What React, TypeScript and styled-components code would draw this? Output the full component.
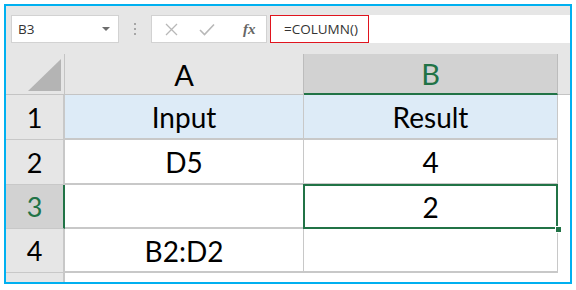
import { Fragment } from 'react'
import styled, { createGlobalStyle } from 'styled-components'

const GlobalStyle = createGlobalStyle`
  html, body {
    margin: 0;
    padding: 0;
    background: #ffffff;
  }
  body {
    font-family: 'Lato', 'Liberation Sans', sans-serif;
  }
`

const Frame = styled.div`
  margin: 4px 0 0 4px;
  width: 568px;
  height: 280px;
  box-sizing: border-box;
  border: 2px solid #00b0f0;
  background: #e6e6e6;
  overflow: hidden;
  display: flex;
  flex-direction: column;
`

const FormulaBar = styled.div`
  flex-shrink: 0;
  display: flex;
  align-items: stretch;
  height: 28px;
  margin-top: 9px;
  padding-left: 5px;
  font-family: 'Open Sans', 'Noto Sans', sans-serif;
  font-size: 13.5px;
  color: #333333;
`

const NameBox = styled.div`
  width: 108px;
  box-sizing: border-box;
  background: #ffffff;
  border: 1px solid #d2d2d2;
  display: flex;
  align-items: center;
  justify-content: space-between;
  padding: 0 8px 0 6px;
`

const DropArrow = styled.span`
  width: 0;
  height: 0;
  border-left: 4px solid transparent;
  border-right: 4px solid transparent;
  border-top: 4px solid #6d6d6d;
`

const Grip = styled.div`
  width: 32px;
  display: flex;
  flex-direction: column;
  align-items: center;
  justify-content: center;
  gap: 3px;
`

const GripDot = styled.span`
  width: 2px;
  height: 2px;
  background: #a6a6a6;
`

const IconBox = styled.div`
  width: 116px;
  box-sizing: border-box;
  background: #ffffff;
  border: 1px solid #d2d2d2;
  display: flex;
  align-items: center;
  padding-left: 13px;
  gap: 21px;
`

const FxLabel = styled.span`
  font-family: 'Liberation Serif', 'DejaVu Serif', serif;
  font-style: italic;
  font-weight: bold;
  font-size: 15px;
  color: #666666;
  margin-left: 7px;
`

const FormulaInput = styled.div`
  flex: 1;
  margin-left: 3px;
  background: #ffffff;
  display: flex;
`

const FormulaText = styled.div`
  width: 99px;
  box-sizing: border-box;
  border: 1px solid #e0141e;
  display: flex;
  align-items: center;
  padding-left: 13px;
  color: #333333;
`

const Grid = styled.div`
  flex-shrink: 0;
  margin-top: 11px;
  display: grid;
  grid-template-columns: 59px 239px 254px 12px;
  grid-template-rows: 41px 45px 45px 44px 44px 20px;
`

const Corner = styled.div`
  background: #e6e6e6;
  border-right: 1px solid #c4c4c4;
  border-bottom: 1px solid #c4c4c4;
  display: flex;
  align-items: flex-end;
  justify-content: flex-end;
  padding: 0 3px 3px 0;
`

const ColHeader = styled.div<{ $active?: boolean; $empty?: boolean }>`
  background: ${({ $active }) => ($active ? '#d2d2d2' : '#e6e6e6')};
  border-right: ${({ $empty }) => ($empty ? 'none' : '1px solid #bcbcbc')};
  border-bottom: ${({ $active }) => ($active ? '2px solid #217346' : '1px solid #c4c4c4')};
  display: flex;
  align-items: center;
  justify-content: center;
  font-size: 29px;
  color: ${({ $active }) => ($active ? '#217346' : '#000000')};
`

const RowHeader = styled.div<{ $active?: boolean }>`
  background: ${({ $active }) => ($active ? '#d2d2d2' : '#e6e6e6')};
  border-right: ${({ $active }) => ($active ? '2px solid #217346' : '2px solid #c8c8c8')};
  border-bottom: 1px solid #c8c8c8;
  display: flex;
  align-items: center;
  justify-content: center;
  font-size: 27px;
  color: ${({ $active }) => ($active ? '#217346' : '#000000')};
`

const Cell = styled.div<{ $head?: boolean; $selected?: boolean }>`
  position: relative;
  background: ${({ $head }) => ($head ? '#ddebf7' : '#ffffff')};
  border-right: 1px solid #c8c8c8;
  border-bottom: 2px solid #c8c8c8;
  display: flex;
  align-items: center;
  justify-content: center;
  padding-top: 1px;
  font-size: 28px;
  color: #000000;

  ${({ $selected }) =>
    $selected &&
    `
    &::after {
      content: '';
      position: absolute;
      inset: -1px -1px -2px -1px;
      border: 2px solid #217346;
    }
  `}
`

const FillHandle = styled.span`
  position: absolute;
  right: -5px;
  bottom: -6px;
  width: 5px;
  height: 5px;
  background: #217346;
  border: 1px solid #ffffff;
  z-index: 2;
`

const Spill = styled.div`
  background: #ffffff;
`

const rows = [
  { n: '1', a: 'Input', b: 'Result', head: true },
  { n: '2', a: 'D5', b: '4' },
  { n: '3', a: '', b: '2', active: true },
  { n: '4', a: 'B2:D2', b: '' },
]

export default function App() {
  return (
    <>
      <GlobalStyle />
      <Frame>
        <FormulaBar>
          <NameBox>
            <span>B3</span>
            <DropArrow />
          </NameBox>
          <Grip>
            <GripDot />
            <GripDot />
            <GripDot />
          </Grip>
          <IconBox>
            <svg width="13" height="13" viewBox="0 0 13 13">
              <path d="M1 1 L12 12 M12 1 L1 12" stroke="#b8b8b8" strokeWidth="1.3" fill="none" />
            </svg>
            <svg width="16" height="13" viewBox="0 0 16 13">
              <path d="M1 7 L5.5 11.5 L15 1.5" stroke="#b8b8b8" strokeWidth="1.6" fill="none" />
            </svg>
            <FxLabel>fx</FxLabel>
          </IconBox>
          <FormulaInput>
            <FormulaText>=COLUMN()</FormulaText>
          </FormulaInput>
        </FormulaBar>
        <Grid>
          <Corner>
            <svg width="33" height="32" viewBox="0 0 33 32">
              <path d="M33 0 L33 32 L0 32 Z" fill="#b4b4b4" />
            </svg>
          </Corner>
          <ColHeader>A</ColHeader>
          <ColHeader $active>B</ColHeader>
          <ColHeader $empty />
          {rows.map((r) => (
            <Fragment key={r.n}>
              <RowHeader $active={r.active}>{r.n}</RowHeader>
              <Cell $head={r.head}>{r.a}</Cell>
              <Cell $head={r.head} $selected={r.active}>
                {r.b}
                {r.active && <FillHandle />}
              </Cell>
              <Spill />
            </Fragment>
          ))}
          <RowHeader />
          <Spill />
          <Spill />
          <Spill />
        </Grid>
      </Frame>
    </>
  )
}
